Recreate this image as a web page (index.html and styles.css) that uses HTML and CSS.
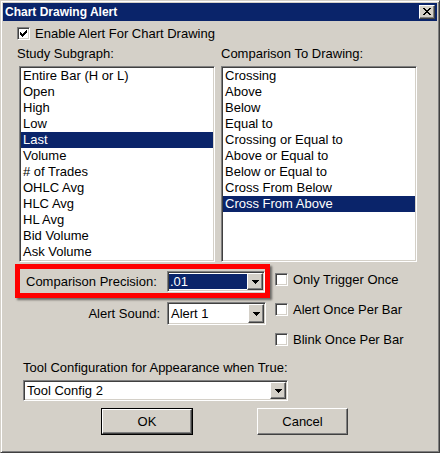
FILE: index.html
```html
<!DOCTYPE html>
<html>
<head>
<meta charset="utf-8">
<link rel="stylesheet" href="styles.css">
</head>
<body>
<div class="window">
  <div class="titlebar">
    <span class="title">Chart Drawing Alert</span>
    <span class="close raised"><svg width="8" height="7" viewBox="0 0 8 7" shape-rendering="crispEdges"><path fill="#000" d="M0 0h2v1H0zM6 0h2v1H6zM1 1h2v1H1zM5 1h2v1H5zM2 2h4v1H2zM3 3h2v1H3zM2 4h4v1H2zM1 5h2v1H1zM5 5h2v1H5zM0 6h2v1H0zM6 6h2v1H6z"/></svg></span>
  </div>
  <div class="content">
    <div class="check-row top-check">
      <span class="cb sunken"><svg width="9" height="9" viewBox="0 0 9 9" shape-rendering="crispEdges"><path fill="#000" d="M7 1h1v1H7zM6 2h2v1H6zM1 3h1v1H1zM5 3h3v1H5zM1 4h2v1H1zM4 4h3v1H4zM1 5h5v1H1zM2 6h3v1H2zM3 7h1v1H3z"/></svg></span>
      <span class="cb-label">Enable Alert For Chart Drawing</span>
    </div>
    <div class="lists">
      <div class="list-col left">
        <div class="caption">Study Subgraph:</div>
        <div class="listbox sunken">
          <div class="item">Entire Bar (H or L)</div>
          <div class="item">Open</div>
          <div class="item">High</div>
          <div class="item">Low</div>
          <div class="item sel">Last</div>
          <div class="item">Volume</div>
          <div class="item"># of Trades</div>
          <div class="item">OHLC Avg</div>
          <div class="item">HLC Avg</div>
          <div class="item">HL Avg</div>
          <div class="item">Bid Volume</div>
          <div class="item">Ask Volume</div>
        </div>
      </div>
      <div class="list-col right">
        <div class="caption">Comparison To Drawing:</div>
        <div class="listbox sunken">
          <div class="item">Crossing</div>
          <div class="item">Above</div>
          <div class="item">Below</div>
          <div class="item">Equal to</div>
          <div class="item">Crossing or Equal to</div>
          <div class="item">Above or Equal to</div>
          <div class="item">Below or Equal to</div>
          <div class="item">Cross From Below</div>
          <div class="item sel">Cross From Above</div>
        </div>
      </div>
    </div>
    <div class="middle">
      <div class="left-col">
        <div class="mark-box">
          <span class="lbl precision-lbl">Comparison Precision:</span>
          <div class="combo sunken precision">
            <span class="val"><span class="val-sel">.01</span></span>
            <span class="ddbtn raised"><svg width="7" height="4" viewBox="0 0 7 4" shape-rendering="crispEdges"><path fill="#000" d="M0 0h7v1H0zM1 1h5v1H1zM2 2h3v1H2zM3 3h1v1H3z"/></svg></span>
          </div>
        </div>
        <div class="sound-row">
          <span class="lbl">Alert Sound:</span>
          <div class="combo sunken sound">
            <span class="val">Alert 1</span>
            <span class="ddbtn raised"><svg width="7" height="4" viewBox="0 0 7 4" shape-rendering="crispEdges"><path fill="#000" d="M0 0h7v1H0zM1 1h5v1H1zM2 2h3v1H2zM3 3h1v1H3z"/></svg></span>
          </div>
        </div>
      </div>
      <div class="opts">
        <div class="check-row"><span class="cb sunken"></span><span class="cb-label">Only Trigger Once</span></div>
        <div class="check-row"><span class="cb sunken"></span><span class="cb-label">Alert Once Per Bar</span></div>
        <div class="check-row"><span class="cb sunken"></span><span class="cb-label">Blink Once Per Bar</span></div>
      </div>
    </div>
    <div class="tool">
      <div class="caption">Tool Configuration for Appearance when True:</div>
      <div class="combo sunken tool-combo">
        <span class="val">Tool Config 2</span>
        <span class="ddbtn raised"><svg width="7" height="4" viewBox="0 0 7 4" shape-rendering="crispEdges"><path fill="#000" d="M0 0h7v1H0zM1 1h5v1H1zM2 2h3v1H2zM3 3h1v1H3z"/></svg></span>
      </div>
      <div class="buttons">
        <div class="btn default"><span class="btn-in">OK</span></div>
        <div class="btn raised cancel"><span>Cancel</span></div>
      </div>
    </div>
  </div>
</div>
</body>
</html>
```
FILE: styles.css
```css
* { box-sizing: border-box; }
html, body { margin: 0; padding: 0; }
body {
  width: 440px;
  height: 453px;
  overflow: hidden;
  background: #d4d0c8;
  font-family: "Liberation Sans", Arial, sans-serif;
  font-size: 13px;
  color: #000;
}
.window {
  width: 440px;
  height: 453px;
  background: #d4d0c8;
  border: 1px solid;
  border-color: #d4d0c8 #404040 #404040 #d4d0c8;
  box-shadow: inset 1px 1px #fff, inset -1px -1px #808080;
  padding: 2px;
  display: flex;
  flex-direction: column;
}
.titlebar {
  height: 18px;
  flex: none;
  background: #0a246a;
  display: flex;
  justify-content: space-between;
  align-items: flex-start;
  padding-left: 2px;
}
.title {
  color: #fff;
  font-weight: bold;
  font-size: 12px;
  line-height: 18px;
}
.raised {
  background: #d4d0c8;
  border: 1px solid;
  border-color: #fff #404040 #404040 #fff;
  box-shadow: inset -1px -1px #808080;
}
.sunken {
  border: 1px solid;
  border-color: #808080 #fff #fff #808080;
  box-shadow: inset 1px 1px #404040, inset -1px -1px #d4d0c8;
}
.close {
  width: 16px;
  height: 14px;
  margin: 2px 2px 0 0;
  display: flex;
  align-items: center;
  justify-content: center;
  padding-bottom: 1px;
}
.close svg { display: block; }
.content {
  padding-left: 14px;
  flex: 1;
  display: flex;
  flex-direction: column;
}
.check-row {
  display: flex;
  align-items: center;
  height: 13px;
  line-height: 16px;
  white-space: nowrap;
}
.top-check { margin-top: 6px; }
.cb {
  width: 13px;
  height: 13px;
  flex: none;
  background: #fff;
  padding: 1px;
  display: flex;
}
.cb svg { display: block; }
.cb-label { margin-left: 5px; }
.lists {
  margin-top: 6px;
  display: grid;
  grid-template-columns: 198px 196px;
  column-gap: 6px;
}
.caption {
  line-height: 16px;
  height: 16px;
  white-space: nowrap;
}
.listbox {
  margin-top: 4px;
  width: 196px;
  height: 196px;
  background: #fff;
  padding: 1px;
  overflow: hidden;
}
.list-col.left .listbox { margin-left: 2px; }
.item {
  height: 16px;
  line-height: 16px;
  padding-left: 2px;
  white-space: nowrap;
}
.item.sel { background: #0a246a; color: #fff; }
.middle {
  margin-top: 2px;
  margin-left: -2px;
  display: flex;
}
.left-col {
  width: 255px;
  display: flex;
  flex-direction: column;
}
.mark-box {
  height: 34px;
  border: 5px solid #ff0000;
  box-shadow: 2px 2px 2px rgba(0, 0, 0, 0.5);
  display: flex;
  align-items: flex-start;
  padding: 2px 0 0 6px;
}
.lbl { line-height: 16px; white-space: nowrap; }
.precision-lbl { flex: 1; margin-top: 3px; }
.combo {
  display: flex;
  background: #fff;
  padding: 1px;
  height: 21px;
}
.combo .val {
  flex: 1;
  padding-left: 2px;
  line-height: 17px;
  white-space: nowrap;
  overflow: hidden;
}
.combo.precision { width: 98px; }
.combo.precision .val { padding: 1px 0 1px 0; display: flex; }
.val-sel {
  flex: 1;
  background: #0a246a;
  color: #fff;
  line-height: 15px;
  padding-left: 1px;
}
.ddbtn {
  width: 16px;
  flex: none;
  display: flex;
  align-items: center;
  justify-content: center;
}
.ddbtn svg { display: block; }
.sound-row {
  margin-top: 4px;
  display: flex;
  justify-content: flex-end;
  align-items: center;
  padding-right: 4px;
}
.sound-row .lbl { margin-right: 7px; }
.combo.sound { width: 99px; height: 23px; }
.combo.sound .val { line-height: 19px; }
.opts {
  margin-left: 5px;
  padding-top: 9px;
  display: flex;
  flex-direction: column;
  gap: 17px;
}
.tool {
  margin-top: 14px;
  margin-left: 6px;
}
.tool-combo {
  margin-top: 4px;
  width: 265px;
}
.buttons {
  margin-top: 7px;
  display: flex;
}
.btn {
  height: 27px;
  display: flex;
  align-items: center;
  justify-content: center;
}
.btn.default {
  width: 92px;
  margin-left: 78px;
  border: 1px solid #000;
  display: flex;
  align-items: stretch;
}
.btn-in {
  flex: 1;
  display: flex;
  align-items: center;
  justify-content: center;
  border: 1px solid;
  border-color: #fff #404040 #404040 #fff;
  box-shadow: inset -1px -1px #808080;
}
.btn.cancel {
  width: 91px;
  margin-left: 64px;
}
```
